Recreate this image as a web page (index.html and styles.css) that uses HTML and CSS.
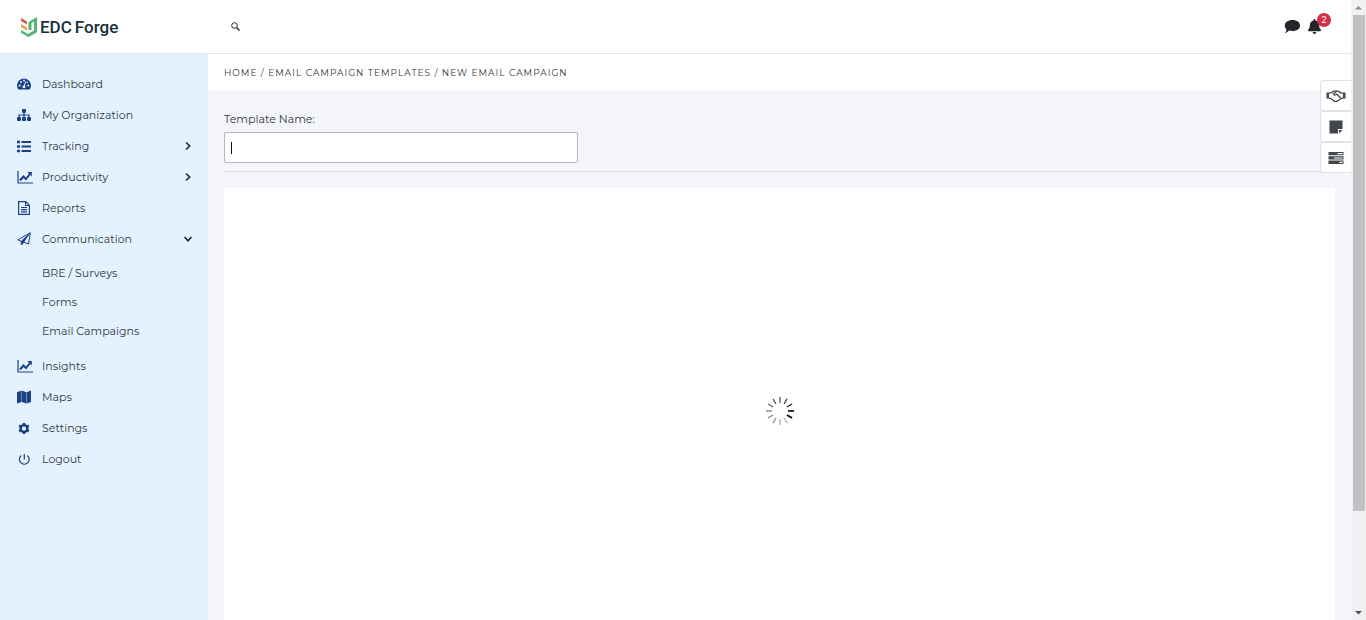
FILE: index.html
```html
<!DOCTYPE html>
<html lang="en">
	<head>
		<meta charset="UTF-8">
		<title>EDC Forge - New Email Campaign</title>
		<link rel="stylesheet" href="styles.css">
	</head>
	<body>
		<svg class="defs" aria-hidden="true">
			<symbol id="chart" viewBox="0 0 16 14">
				<path d="M1 1v12h15" fill="none" stroke="currentColor" stroke-width="1.2"/>
				<path d="M3 10.500l3.500-4 2.500 2.500 4-5" fill="none" stroke="currentColor" stroke-width="2"/>
				<path d="M10.300 2h4.500v4.500z" fill="currentColor"/>
			</symbol>
			<symbol id="chevron" viewBox="0 0 10 10">
				<path d="M3 1.500L6.700 5 3 8.500" fill="none" stroke="currentColor" stroke-width="1.700"/>
			</symbol>
		</svg>

		<div class="page">
			<header class="header">
				<a class="logo" href="#">
					<svg class="logo-mark" viewBox="0 0 16 20" aria-hidden="true">
						<path d="M0 1l6 3.400v3L0 4z" fill="#d9534a"/>
						<path d="M0 7l6 3.400v3L0 10z" fill="#eda14b"/>
						<path d="M0 13l7 4 6-3.400V4.600l-2.500 1.400v7H7.500V5L16 0v15.200l-8.500 4.800L0 15.800z" fill="#54b471"/>
					</svg>
					<span>EDC</span>
					<span>Forge</span>
				</a>
				<button class="icon-btn search" type="button" aria-label="Search">
					<svg width="9" height="9" viewBox="0 0 9 9"><circle cx="3.500" cy="3.500" r="2.800" fill="none" stroke="currentColor"/><path d="M5.500 5.500l3 3" stroke="currentColor" stroke-width="1.400"/></svg>
				</button>
				<div class="header-right">
					<button class="icon-btn" type="button" aria-label="Messages">
						<svg width="16" height="14" viewBox="0 0 16 14"><path d="M8.500 0C13 0 16 2.300 16 5.500S13 11 8.500 11c-1.200 0-2.400-.2-3.400-.5C4 11.600 2.500 12.700.8 13c1-1.100 1.500-2.200 1.600-3.600C1.300 8.400.8 7 .8 5.500.8 2.300 4 0 8.500 0z" fill="currentColor"/></svg>
					</button>
					<button class="icon-btn bell" type="button" aria-label="Notifications">
						<svg width="13" height="15" viewBox="0 0 448 512"><path d="M224 512c35.320 0 63.970-28.650 63.970-64H160.030c0 35.350 28.650 64 63.970 64zm215.390-149.710c-19.320-20.760-55.470-51.990-55.470-154.290 0-77.700-54.480-139.900-127.940-155.160V32c0-17.670-14.320-32-31.980-32s-31.980 14.330-31.980 32v20.840C118.560 68.100 64.080 130.300 64.080 208c0 102.300-36.150 133.530-55.470 154.290-6 6.450-8.660 14.160-8.610 21.710.11 16.400 12.980 32 32.100 32h383.800c19.120 0 32-15.600 32.100-32 .05-7.550-2.610-15.270-8.610-21.710z" fill="currentColor"/></svg>
						<span class="badge">2</span>
					</button>
				</div>
			</header>

			<div class="wrapper">
				<nav class="sidebar">
					<ul class="menu">
						<li><a href="#">
							<svg class="icon" viewBox="0 0 14 14"><path d="M1.300 12.500A7 7 0 1 1 12.700 12.500z" fill="currentColor"/><g fill="#e3f2fe"><circle cx="2.700" cy="8.500" r="1"/><circle cx="4" cy="4.900" r="1"/><circle cx="7" cy="3.400" r="1"/><circle cx="11.300" cy="8.500" r="1"/><circle cx="10.300" cy="5.200" r=".8"/></g><path d="M8.700 4.500L7.300 9" stroke="#e3f2fe"/><circle cx="7" cy="9.800" r="1.500" fill="#e3f2fe"/></svg>
							<span>Dashboard</span></a></li>
						<li><a href="#">
							<svg class="icon" viewBox="0 0 14 14"><path d="M7 3v7M2 10V7h10v3" fill="none" stroke="currentColor" stroke-width="1.200"/><g fill="currentColor"><rect x="5" y="1" width="4" height="4" rx="1"/><rect y="9" width="4" height="4" rx="1"/><rect x="5" y="9" width="4" height="4" rx="1"/><rect x="10" y="9" width="4" height="4" rx="1"/></g></svg>
							<span>My Organization</span></a></li>
						<li><a href="#">
							<svg class="icon" viewBox="0 0 14 14"><path d="M0 3h3M0 7.500h3M0 12h3" stroke="currentColor" stroke-width="2.500"/><path d="M4.500 3H14M4.500 7.500H14M4.500 12H14" stroke="currentColor" stroke-width="1.800"/></svg>
							<span>Tracking</span>
							<svg class="arrow"><use href="#chevron"/></svg></a></li>
						<li><a href="#">
							<svg class="icon wide"><use href="#chart"/></svg>
							<span>Productivity</span>
							<svg class="arrow"><use href="#chevron"/></svg></a></li>
						<li><a href="#">
							<svg class="icon" viewBox="0 0 14 14"><path d="M1.600.6h7.200l3.600 3.600v9.200H1.600zM8.600.8v3.700h3.700M4 6.500h6M4 8.700h6M4 10.900h6" fill="none" stroke="currentColor" stroke-width="1.200"/></svg>
							<span>Reports</span></a></li>
						<li><a href="#">
							<svg class="icon" viewBox="0 0 14 14"><path d="M13.300.8L.8 7.800l3.500 1.500L13.300.8 11.500 12 7 10.200M4.300 9.300V13l2.700-2.800" fill="none" stroke="currentColor" stroke-linejoin="round"/><path d="M13.300.8L4.300 9.300V13.300L7 10.200z" fill="currentColor"/></svg>
							<span>Communication</span>
							<svg class="arrow open"><use href="#chevron"/></svg></a>
							<ul class="submenu">
								<li><a href="#">BRE / Surveys</a></li>
								<li><a href="#">Forms</a></li>
								<li><a href="#">Email Campaigns</a></li>
							</ul>
						</li>
						<li><a href="#">
							<svg class="icon wide"><use href="#chart"/></svg>
							<span>Insights</span></a></li>
						<li><a href="#">
							<svg class="icon" viewBox="0 0 14 14"><path d="M0 2.300L4.400.6v11.300L0 13.600zM4.800.6l4.400 1.700v11.300l-4.400-1.700zM9.600 2.300L14 .6v11.300l-4.400 1.700z" fill="currentColor"/></svg>
							<span>Maps</span></a></li>
						<li><a href="#">
							<svg class="icon" viewBox="0 0 14 14"><circle cx="7" cy="7.500" r="3.200" fill="none" stroke="currentColor" stroke-width="2.600"/><path d="M7 2v2.500M7 10.500V13M2.200 4.750l2.200 1.250M9.600 9l2.200 1.250M2.200 10.250L4.400 9M9.600 6l2.200-1.250" stroke="currentColor" stroke-width="2.600"/><circle cx="7" cy="7.500" r="1.900" fill="#e3f2fe"/></svg>
							<span>Settings</span></a></li>
						<li><a href="#">
							<svg class="icon" viewBox="0 0 14 14"><path d="M4.300 3.500a4.900 4.900 0 1 0 6 0M7.300 2v5.500" fill="none" stroke="currentColor" stroke-width="1.200"/></svg>
							<span>Logout</span></a></li>
					</ul>
				</nav>

				<main class="main">
					<div class="breadcrumb">
						<a href="#">Home</a> / <a href="#">Email Campaign Templates</a> / <span>New Email Campaign</span>
					</div>
					<div class="content">
						<form class="template-form">
							<label for="templateName">Template Name:</label>
							<input type="text" id="templateName">
						</form>
						<div class="editor">
							<svg class="spinner" viewBox="-14 -14 28 28" stroke="#000" stroke-width="1.200">
								<path d="M8 0h6" stroke-width="1.600"/>
								<path d="M8 0h6" transform="rotate(30)" stroke-width="1.600"/>
								<path d="M8 0h6" transform="rotate(60)" opacity=".3"/>
								<path d="M8 0h6" transform="rotate(90)" opacity=".35"/>
								<path d="M8 0h6" transform="rotate(120)" opacity=".45"/>
								<path d="M8 0h6" transform="rotate(150)" opacity=".5"/>
								<path d="M8 0h6" transform="rotate(180)" opacity=".55"/>
								<path d="M8 0h6" transform="rotate(210)" opacity=".6"/>
								<path d="M8 0h6" transform="rotate(240)" opacity=".7"/>
								<path d="M8 0h6" transform="rotate(270)" opacity=".7"/>
								<path d="M8 0h6" transform="rotate(300)" opacity=".8"/>
								<path d="M8 0h6" transform="rotate(330)" opacity=".9"/>
							</svg>
						</div>
					</div>
				</main>
			</div>

			<div class="side-tools">
				<button type="button" aria-label="Partners">
					<svg width="20" height="14" viewBox="0 0 20 14"><path d="M.5 3.500H3v6H.5zM17 3.500h2.500v6H17z" fill="currentColor"/><path d="M3 3.800h2.500l2-1.600h5l2 1.600H17M3 9.300h1.500l4 3h2.500l4.500-3H17M10.500 2.500L7.500 5c.5 1.500 2 1.500 3.300.2L15 9.300" fill="none" stroke="currentColor" stroke-width="1.200"/></svg>
				</button>
				<button type="button" aria-label="Notes">
					<svg width="14" height="14" viewBox="0 0 14 14"><path d="M.5.500h13v8.500H9v4.500H.5z" fill="currentColor"/><path d="M10 10h3.500L10 13.500z" fill="currentColor"/></svg>
				</button>
				<button type="button" aria-label="Tasks">
					<svg width="16" height="12" viewBox="0 0 16 12"><path d="M.5 0h15v3.300H.5zM.5 4.300h15v3.300H.5zM.5 8.600h15v3.300H.5z" fill="currentColor"/><path d="M9.500 1.700h5M6 6h8.500M11.500 10.300h3" stroke="#fff" stroke-width="1.200"/></svg>
				</button>
			</div>
		</div>

		<div class="scrollbar" aria-hidden="true">
			<svg viewBox="0 0 15 15"><path d="M4 9.500h7L7.500 6z" fill="#8b8b8b"/></svg>
			<div class="track"><div class="thumb"></div></div>
			<svg viewBox="0 0 15 15"><path d="M4 6h7L7.500 9.500z" fill="#505050"/></svg>
		</div>
	</body>
</html>
```

FILE: styles.css
```css
*{
	box-sizing: border-box;
}
body{
	margin: 0;
	height: 100vh;
	display: flex;
	overflow: hidden;
	font-family: Montserrat, Inter, sans-serif;
	font-size: 11px;
	color: #33383e;
	background: #fff;
}
a{
	color: inherit;
	text-decoration: none;
}
ul{
	list-style: none;
	margin: 0;
	padding: 0;
}
button{
	padding: 0;
	border: 0;
	background: none;
	cursor: pointer;
}
.defs{
	position: absolute;
	width: 0;
	height: 0;
}
.page{
	position: relative;
	flex: 1;
	min-width: 0;
	display: flex;
	flex-direction: column;
}

/* header */
.header{
	flex: none;
	display: flex;
	align-items: center;
	height: 54px;
	padding: 0 21px;
	border-bottom: 1px solid #e6e7ea;
}
.logo{
	display: flex;
	align-items: center;
	gap: 3px;
	width: 210px;
	font-family: Roboto, sans-serif;
	font-size: 17px;
	font-weight: 500;
	color: #15303b;
}
.logo-mark{
	width: 16px;
	height: 20px;
}
.icon-btn{
	display: flex;
	color: #22262a;
}
.header-right{
	display: flex;
	align-items: center;
	gap: 8px;
	margin-left: auto;
	padding-right: 9px;
}
.bell{
	position: relative;
}
.badge{
	position: absolute;
	left: 9px;
	top: -6px;
	width: 14px;
	height: 14px;
	border-radius: 50%;
	background: #d32f45;
	color: #fff;
	font-family: Inter, sans-serif;
	font-size: 9px;
	line-height: 14px;
	text-align: center;
}

/* sidebar */
.wrapper{
	flex: 1;
	min-height: 0;
	display: flex;
}
.sidebar{
	flex: none;
	width: 208px;
	padding-top: 14px;
	background: #e3f2fe;
}
.menu > li > a{
	display: flex;
	align-items: center;
	gap: 11px;
	height: 31px;
	padding: 0 15px 0 17px;
}
.icon{
	width: 14px;
	height: 14px;
	color: #1c3f85;
}
.wide{
	width: 16px;
	margin-right: -2px;
}
.arrow{
	width: 10px;
	height: 10px;
	margin-left: auto;
	color: #22303c;
}
.open{
	transform: rotate(90deg);
}
.submenu{
	padding: 5px 0 4px 42px;
}
.submenu a{
	display: block;
	line-height: 29px;
}

/* content */
.main{
	flex: 1;
	min-width: 0;
	overflow: hidden;
	background: #f3f5fa;
}
.breadcrumb{
	height: 37px;
	padding: 0 16px;
	background: #fff;
	font-size: 9px;
	line-height: 38px;
	letter-spacing: 1px;
	text-transform: uppercase;
}
.content{
	padding: 20px 16px;
}
.template-form{
	padding-bottom: 8px;
	border-bottom: 1px solid #dcdee3;
	margin-bottom: 16px;
}
.template-form label{
	display: block;
	margin-bottom: 5px;
	line-height: 16px;
}
.template-form input{
	display: block;
	width: 100%;
	max-width: 354px;
	height: 31px;
	padding: 0 6px;
	border: 1px solid #b4b6bd;
	border-radius: 2px;
	/* text cursor */
	background: #fff linear-gradient(#111, #111) 6px center / 1px 12px no-repeat;
	font: inherit;
	outline: none;
}
.editor{
	display: flex;
	align-items: center;
	justify-content: center;
	height: 446px;
	background: #fff;
}
.spinner{
	width: 28px;
	height: 28px;
}

/* buttons on the right edge */
.side-tools{
	position: absolute;
	right: 0;
	top: 80px;
	display: flex;
	flex-direction: column;
}
.side-tools button{
	display: flex;
	align-items: center;
	justify-content: center;
	width: 31px;
	height: 31px;
	border: 1px solid #dfe1e5;
	border-right: 0;
	border-radius: 3px 0 0 3px;
	background: #fff;
	color: #43474c;
}

.scrollbar{
	flex: none;
	width: 15px;
	display: flex;
	flex-direction: column;
	background: #f1f1f1;
}
.scrollbar svg{
	width: 15px;
	height: 15px;
}
.track{
	flex: 1;
	padding: 0 1px 0 2px;
}
.thumb{
	height: 84%;
	background: #c1c1c1;
}
```
